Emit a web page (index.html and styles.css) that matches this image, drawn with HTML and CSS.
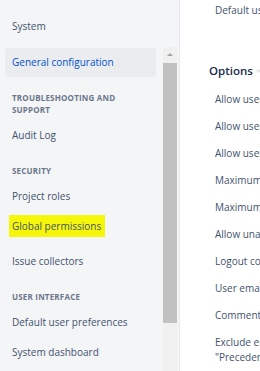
FILE: index.html
```
<!DOCTYPE html>
<html lang="en">
<head>
    <meta charset="UTF-8">
    <meta name="viewport" content="width=device-width, initial-scale=1.0">
    <title>General configuration</title>
    <link rel="stylesheet" href="styles.css">
</head>
<body>
    <div class="sidebar">
        <nav class="nav">
            <a class="nav-link first">System</a>
            <a class="nav-link active">General configuration</a>
            <div class="nav-heading">Troubleshooting and support</div>
            <a class="nav-link">Audit Log</a>
            <div class="nav-heading">Security</div>
            <a class="nav-link">Project roles</a>
            <a class="nav-link marked"><span class="mark">Global permissions</span></a>
            <a class="nav-link">Issue collectors</a>
            <div class="nav-heading">User interface</div>
            <a class="nav-link">Default user preferences</a>
            <a class="nav-link">System dashboard</a>
        </nav>
        <div class="scrollbar">
            <div class="scroll-arrow"></div>
            <div class="scroll-thumb"></div>
        </div>
    </div>
    <div class="content">
        <div class="option top">Default user time zone</div>
        <h2 class="section-title">Options
            <svg class="help" width="14" height="14" viewBox="0 0 14 14"><circle cx="7" cy="7" r="5.5" fill="none" stroke="#7a869a" stroke-width="1.3"/></svg>
        </h2>
        <div class="option">Allow users to vote on issues</div>
        <div class="option">Allow users to watch issues</div>
        <div class="option">Allow users to share filters</div>
        <div class="option">Maximum project name size</div>
        <div class="option">Maximum project key size</div>
        <div class="option">Allow unassigned issues</div>
        <div class="option">Logout confirmation</div>
        <div class="option">User email visibility</div>
        <div class="option">Comment visibility</div>
        <div class="option wrap">Exclude email header<br>"Precedence: bulk"</div>
    </div>
</body>
</html>
```

FILE: styles.css
```
body {
    font-family: "Open Sans", Arial, sans-serif;
    margin: 0;
    height: 371px;
    overflow: hidden;
    display: flex;
    background: #fff;
    color: #42526e;
    font-size: 10px;
}
.sidebar {
    width: 179px;
    flex-shrink: 0;
    background: #f4f5f7;
    border-right: 1px solid #e8e9ec;
    display: flex;
}
.nav {
    width: 163px;
    padding-top: 11px;
    display: flex;
    flex-direction: column;
}
.nav-link {
    display: block;
    height: 30px;
    line-height: 30px;
    margin: 0 7px 0 5px;
    padding-left: 7px;
    white-space: nowrap;
}
.nav-link.active {
    margin-top: 7px;
    height: 29px;
    line-height: 29px;
    background: #ebecf0;
    color: #0052cc;
    border-radius: 3px;
}
.nav-link.marked {
    margin-bottom: 5px;
}
.mark {
    background: #f6f60a;
    padding: 4px 4px 4px 3px;
    margin-left: -3px;
}
.nav-heading {
    max-width: 112px;
    margin: 15px 0 4px 12px;
    font-size: 8px;
    line-height: 12px;
    font-weight: 700;
    text-transform: uppercase;
    color: #6b778c;
    letter-spacing: 0.2px;
}
.scrollbar {
    width: 14px;
    margin-top: 47px;
    background: #f0f0f0;
}
.scroll-arrow {
    height: 16px;
    position: relative;
}
.scroll-arrow::after {
    content: "";
    position: absolute;
    left: 4px;
    top: 6px;
    border-left: 3px solid transparent;
    border-right: 3px solid transparent;
    border-bottom: 3px solid #a3a3a3;
}
.scroll-thumb {
    height: 260px;
    background: #c1c1c1;
}
.content {
    flex: 1;
    overflow: hidden;
    padding-left: 35px;
}
.option {
    padding: 6px 0;
    line-height: 15px;
    white-space: nowrap;
}
.option.top {
    margin-top: -3px;
}
.section-title {
    margin: 37px 0 5px -6px;
    font-size: 11.5px;
    line-height: 20px;
    font-weight: 600;
    color: #172b4d;
    white-space: nowrap;
    display: flex;
    align-items: center;
    gap: 4px;
}
```
